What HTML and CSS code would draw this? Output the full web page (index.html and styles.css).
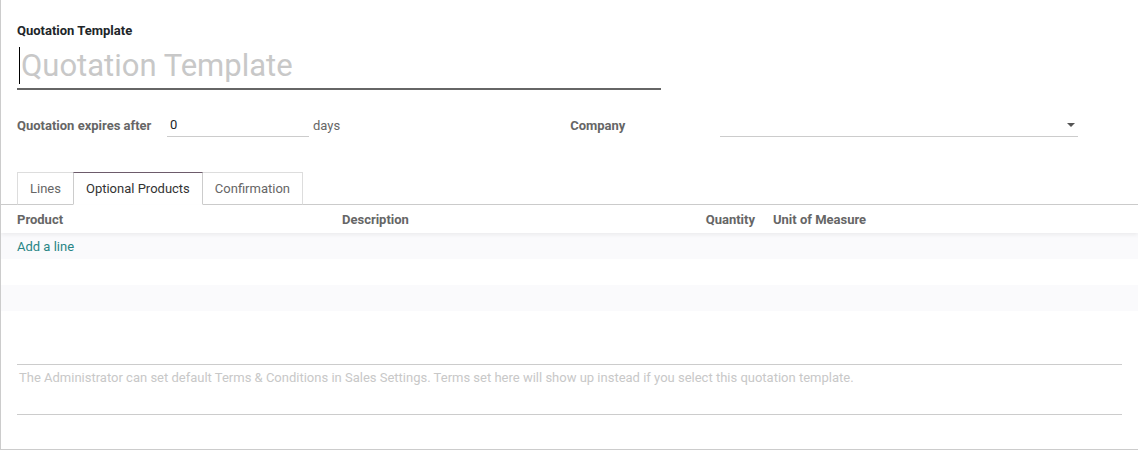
FILE: index.html
```html
<!DOCTYPE html>
<html lang="en">
<head>
  <meta charset="UTF-8" />
  <title>Quotation Template</title>
  <link rel="stylesheet" href="styles.css">
</head>
<body>
  <div class="sheet">
    <div class="title-block">
      <label class="title-label">Quotation Template</label>
      <div class="title-input">
        <span class="caret"></span>
        <span class="placeholder">Quotation Template</span>
      </div>
    </div>

    <div class="group-row">
      <div class="group">
        <label class="field-label">Quotation expires after</label>
        <div class="field-input days-input">0</div>
        <span class="unit">days</span>
      </div>
      <div class="group">
        <label class="field-label company-label">Company</label>
        <div class="field-input company-input">
          <span class="dropdown-caret"></span>
        </div>
      </div>
    </div>

    <div class="tabs">
      <div class="tab">Lines</div>
      <div class="tab active">Optional Products</div>
      <div class="tab">Confirmation</div>
    </div>

    <div class="lines">
      <div class="lines-head">
        <div class="cell">Product</div>
        <div class="cell">Description</div>
        <div class="cell num">Quantity</div>
        <div class="cell uom">Unit of Measure</div>
      </div>
      <div class="line shade"><a class="add-line" href="#">Add a line</a></div>
      <div class="line"></div>
      <div class="line shade"></div>
      <div class="line"></div>
    </div>

    <div class="note">
      The Administrator can set default Terms &amp; Conditions in Sales Settings. Terms set here will show up instead if you select this quotation template.
    </div>
  </div>
</body>
</html>
```

FILE: styles.css
```css
* {
  box-sizing: border-box;
}

body {
  margin: 0;
  background-color: #fff;
  font-family: Roboto, "Noto Sans", sans-serif;
  font-size: 13px;
  color: #4c4c4c;
}

.sheet {
  height: 450px;
  border-left: 1px solid #ccc;
  border-bottom: 1px solid #ccc;
  overflow: hidden;
}

.title-block {
  padding: 21px 0 0 16px;
}

.title-label {
  display: block;
  font-weight: 700;
  font-size: 13px;
  line-height: 20px;
  color: #212529;
}

.title-input {
  display: flex;
  align-items: center;
  width: 644px;
  height: 49px;
  padding-top: 2px;
  border-bottom: 2px solid #666;
}

.caret {
  width: 1px;
  height: 37px;
  margin-left: 2px;
  background-color: #000;
}

.placeholder {
  font-size: 31px;
  color: #c8c8c8;
  margin-left: 1px;
  line-height: 36px;
}

.group-row {
  display: flex;
  padding: 24px 0 0 16px;
}

.group {
  display: flex;
  align-items: center;
  height: 23px;
}

.field-label {
  font-weight: 700;
  color: #666;
  width: 150px;
}

.company-label {
  margin-left: 230px;
}

.field-input {
  height: 23px;
  line-height: 22px;
  border-bottom: 1px solid #ccc;
  padding-left: 3px;
  color: #212529;
}

.days-input {
  width: 142px;
}

.unit {
  margin-left: 4px;
  color: #666;
}

.company-input {
  position: relative;
  width: 358px;
}

.dropdown-caret {
  position: absolute;
  right: 3px;
  top: 9px;
  border-left: 4px solid transparent;
  border-right: 4px solid transparent;
  border-top: 4px solid #555;
}

.tabs {
  display: flex;
  margin-top: 35px;
  padding-left: 16px;
  border-bottom: 1px solid #ccc;
}

.tab {
  height: 33px;
  line-height: 31px;
  padding: 0 12px;
  margin-bottom: -1px;
  border: 1px solid #ddd;
  border-bottom-color: #ccc;
  color: #666;
}

.tab + .tab {
  margin-left: -1px;
}

.tab.active {
  position: relative;
  border-color: #ccc;
  border-top-color: #6d5b6b;
  border-bottom-color: #fff;
  color: #333;
}

.lines-head,
.line {
  display: grid;
  grid-template-columns: 325px 333px 90px 1fr;
  padding-left: 16px;
}

.lines-head {
  height: 28px;
  align-items: center;
  font-weight: 700;
  color: #666;
  box-shadow: 0 2px 4px rgba(0, 0, 0, 0.06);
  position: relative;
}

.num {
  text-align: right;
  padding-right: 10px;
}

.uom {
  padding-left: 8px;
}

.line {
  height: 26px;
  align-items: center;
}

.line.shade {
  background-color: #fafafc;
}

.add-line {
  color: #288585;
  text-decoration: none;
}

.note {
  margin: 27px 16px 0 16px;
  width: 1105px;
  height: 51px;
  padding: 4px 2px 0;
  border-top: 1px solid #ccc;
  border-bottom: 1px solid #ccc;
  font-size: 13px;
  line-height: 17px;
  color: #c8c8c8;
}
```
